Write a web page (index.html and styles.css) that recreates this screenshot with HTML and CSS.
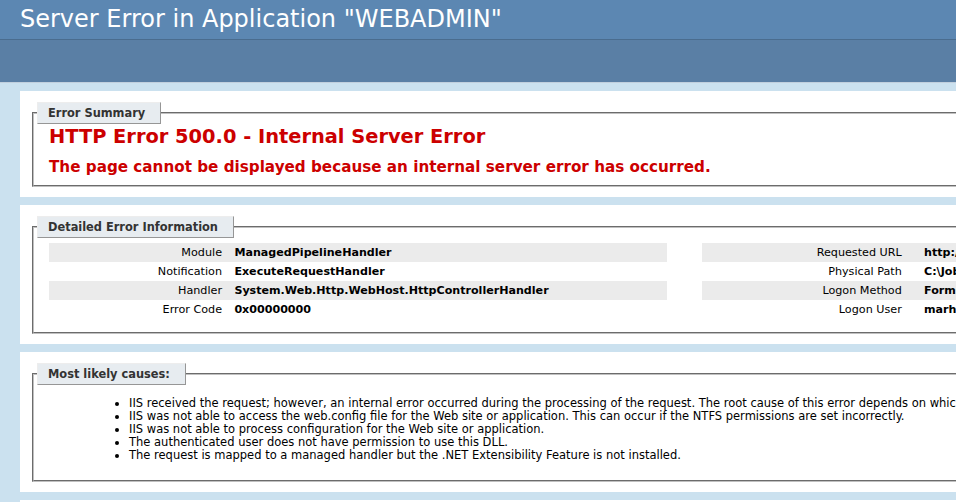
FILE: index.html
```html
<!DOCTYPE html>
<html>
<head>
<meta charset="utf-8">
<title>IIS 7.5 Detailed Error - 500.0 - Internal Server Error</title>
<link rel="stylesheet" href="styles.css">
</head>
<body>
<div class="header"><h1>Server Error in Application "WEBADMIN"</h1></div>
<div class="server-version"></div>
<div class="content">
  <div class="container summary">
    <fieldset>
      <legend>Error Summary</legend>
      <h2>HTTP Error 500.0 - Internal Server Error</h2>
      <h3>The page cannot be displayed because an internal server error has occurred.</h3>
    </fieldset>
  </div>
  <div class="container">
    <fieldset>
      <legend>Detailed Error Information</legend>
      <div class="details">
        <table class="details-left">
          <tr class="alt"><th>Module</th><td>ManagedPipelineHandler</td></tr>
          <tr><th>Notification</th><td>ExecuteRequestHandler</td></tr>
          <tr class="alt"><th>Handler</th><td>System.Web.Http.WebHost.HttpControllerHandler</td></tr>
          <tr><th>Error Code</th><td>0x00000000</td></tr>
        </table>
        <table class="details-right">
          <tr class="alt"><th>Requested URL</th><td>http://localhost:80/WebAdmin/api/account/login</td></tr>
          <tr><th>Physical Path</th><td>C:\Jobs\WebAdmin\api\account\login</td></tr>
          <tr class="alt"><th>Logon Method</th><td>Forms</td></tr>
          <tr><th>Logon User</th><td>marhen</td></tr>
        </table>
      </div>
    </fieldset>
  </div>
  <div class="container">
    <fieldset>
      <legend>Most likely causes:</legend>
      <ul>
        <li>IIS received the request; however, an internal error occurred during the processing of the request. The root cause of this error depends on which module, handler, or pipeline step was executing when the error occurred.</li>
        <li>IIS was not able to access the web.config file for the Web site or application. This can occur if the NTFS permissions are set incorrectly.</li>
        <li>IIS was not able to process configuration for the Web site or application.</li>
        <li>The authenticated user does not have permission to use this DLL.</li>
        <li>The request is mapped to a managed handler but the .NET Extensibility Feature is not installed.</li>
      </ul>
    </fieldset>
  </div>
  <div class="container">
    <fieldset>
      <legend>Things you can try:</legend>
    </fieldset>
  </div>
</div>
</body>
</html>
```

FILE: styles.css
```css
html, body {
  overflow: hidden;
}
body {
  margin: 0;
  font-size: 11.2px;
  font-family: "DejaVu Sans", Verdana, sans-serif;
  background: #CBE1EF;
  color: #000;
}
.header {
  background: #5C87B2;
  padding: 6px 20px;
  height: 27px;
  color: #fff;
}
h1 {
  margin: 0;
  font-size: 24px;
  font-weight: normal;
  line-height: 27px;
  white-space: nowrap;
}
.server-version {
  background: #5A7FA5;
  border-top: 1px solid #4A6C8E;
  border-bottom: 1px solid #C1CFDD;
  height: 42px;
}
.content {
  margin: 8px 0 0 20px;
  width: 1900px;
}
.container {
  background: #fff;
  padding: 11px 10px 10px 10px;
  margin-bottom: 8px;
}
fieldset {
  margin: 0 2px;
  padding: 0 15px 10px 15px;
  border: 2px groove #c0c0c0;
}
.summary fieldset {
  padding-bottom: 9px;
}
legend {
  color: #333;
  padding: 4px 15px 4px 10px;
  margin: 0 0 0 -12px;
  border-top: 1px solid #EDEDED;
  border-left: 1px solid #EDEDED;
  border-right: 1px solid #969696;
  border-bottom: 1px solid #969696;
  background: #E7ECF0;
  font-weight: bold;
  font-size: 11.4px;
  line-height: 12px;
}
h2 {
  margin: 1px 0 0 0;
  font-size: 19.4px;
  line-height: 23px;
  color: #CC0000;
}
h3 {
  margin: 10px 0 0 0;
  font-size: 15.2px;
  line-height: 18px;
  color: #CC0000;
}
.details {
  display: flex;
  align-items: flex-start;
  padding-top: 5px;
}
table {
  border-collapse: collapse;
  margin: 0 0 3px 0;
  font-size: 11.2px;
}
.details-left {
  width: 618px;
  margin-right: 35px;
}
.details-right {
  width: 1110px;
}
th, td {
  padding: 3px 0;
  line-height: 13px;
  vertical-align: top;
  text-align: left;
  font-weight: bold;
  white-space: nowrap;
}
td {
  font-size: 11.1px;
}
th {
  box-sizing: border-box;
  width: 30%;
  padding-right: 2%;
  text-align: right;
  font-weight: normal;
}
.details-right th {
  width: 20%;
}
tr.alt th, tr.alt td {
  background: #EBEBEB;
}
ul {
  margin: 12px 0 8px 40px;
  padding-left: 40px;
  line-height: 13px;
  font-size: 11.5px;
}
li {
  white-space: nowrap;
}
```
